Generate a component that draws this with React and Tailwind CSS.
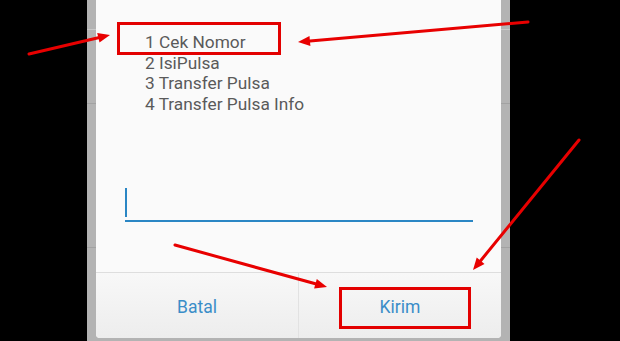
import React from "react";

function Strip() {
  return (
    <div className="w-[9px] h-full flex flex-col bg-[#b3b3b3]">
      <div className="h-[29px]" />
      <div className="h-px bg-[#c9c9c9]" />
      <div className="h-[73px]" />
      <div className="h-px bg-[#a2a2a2]" />
      <div className="h-[143px]" />
      <div className="h-px bg-[#a2a2a2]" />
      <div className="flex-1" />
    </div>
  );
}

export default function App() {
  return (
    <div
      className="relative w-[620px] h-[341px] bg-black flex overflow-hidden"
      style={{ fontFamily: "Roboto, 'Liberation Sans', sans-serif" }}
    >
      <div className="w-[87px] h-full" />
      <Strip />
      <div className="w-[405px] h-full flex flex-col bg-[#b3b3b3]">
        <div className="h-[338px] flex flex-col bg-[#fafafa] rounded-b-[4px] overflow-hidden">
          <div className="pt-[32px] pl-[49px] text-[17.3px] leading-[20.7px] text-[#5a5a5a]">
            <div>1 Cek Nomor</div>
            <div>2 IsiPulsa</div>
            <div>3 Transfer Pulsa</div>
            <div>4 Transfer Pulsa Info</div>
          </div>
          <div className="mt-[73px] ml-[29px] mr-[28px] flex flex-col">
            <div className="w-[2px] h-[29px] bg-[#2a86c4]" />
            <div className="mt-[3px] h-[2px] bg-[#2a86c4]" />
          </div>
          <div className="mt-[50px] h-px bg-[#dedede]" />
          <div className="flex-1 flex bg-gradient-to-b from-[#f8f8f8] to-[#ededed]">
            <div className="flex-1 flex items-center justify-center pt-[3px] text-[17.5px] text-[#3a8dc8]">
              Batal
            </div>
            <div className="w-px bg-[#e2e2e2]" />
            <div className="flex-1 flex items-center justify-center pt-[3px] text-[17.5px] text-[#3a8dc8]">
              Kirim
            </div>
          </div>
        </div>
      </div>
      <Strip />
      <div className="flex-1 h-full" />

      <div className="absolute left-[117px] top-[22px] w-[164px] h-[33px] border-[3px] border-[#e30000]" />
      <div className="absolute left-[339px] top-[287px] w-[132px] h-[42px] border-[3px] border-[#e30000]" />

      <svg className="absolute inset-0" width="620" height="341" viewBox="0 0 620 341">
        <g stroke="#e80000" strokeWidth="3" strokeLinecap="round">
          <line x1="29" y1="54" x2="98.3" y2="37.7" />
          <line x1="528" y1="22" x2="310" y2="41" />
          <line x1="579" y1="140" x2="480.6" y2="260.7" />
          <line x1="175" y1="245" x2="315.4" y2="283.8" />
        </g>
        <g fill="#e80000">
          <polygon points="110,35 99.5,42.6 97.2,32.9" />
          <polygon points="298,42 310.4,45.9 309.5,36" />
          <polygon points="473,270 484.5,263.9 476.7,257.5" />
          <polygon points="327,287 314.1,288.6 316.8,279" />
        </g>
      </svg>
    </div>
  );
}
